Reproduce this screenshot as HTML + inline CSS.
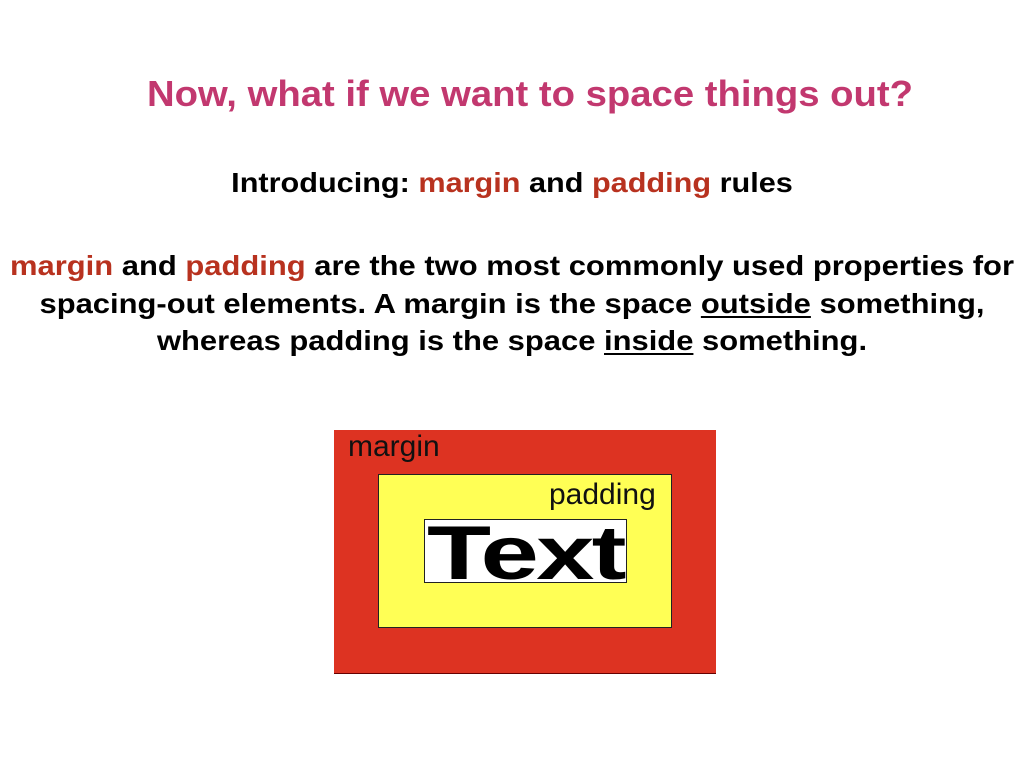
<!DOCTYPE html>
<html><head><style>
body{margin:0;width:1024px;height:768px;background:#fff;position:relative;overflow:hidden;font-family:"Liberation Sans",sans-serif;font-weight:bold}
.t{position:absolute;left:0;width:1024px;text-align:center;white-space:nowrap}
.r{color:#b8321f}
u{text-decoration-thickness:2px;text-underline-offset:3px}
</style></head><body>
<div class="t" style="top:73px;font-size:36px;color:#c2386f;left:18px;transform:scaleX(1.063)">Now, what if we want to space things out?</div>
<div class="t" style="top:167px;font-size:28px;color:#000;left:0;transform:scaleX(1.094)">Introducing: <span class="r">margin</span> and <span class="r">padding</span> rules</div>
<div class="t" style="top:247px;font-size:28px;line-height:37.5px;color:#000;transform:scaleX(1.105)">
<span class="r">margin</span> and <span class="r">padding</span> are the two most commonly used properties for<br>
spacing-out elements. A margin is the space <u>outside</u> something,<br>
whereas padding is the space <u>inside</u> something.</div>
<div style="position:absolute;left:334px;top:430px;width:382px;height:243px;background:#dd3322;border-bottom:1px solid #600"></div>
<div style="position:absolute;left:348px;top:430px;font-size:30px;font-weight:normal;color:#111">margin</div>
<div style="position:absolute;left:378px;top:474px;width:292px;height:152px;background:#ffff55;border:1px solid #222"></div>
<div style="position:absolute;left:549px;top:478px;font-size:30px;font-weight:normal;color:#111">padding</div>
<div style="position:absolute;left:424px;top:519px;width:201px;height:62px;background:#fff;border:1px solid #222;overflow:hidden">
<div style="position:absolute;left:2px;top:-6px;font-size:76px;font-weight:bold;letter-spacing:-2px;color:#000;line-height:80px;transform:scaleX(1.38);transform-origin:0 0">Text</div></div>
</body></html>
